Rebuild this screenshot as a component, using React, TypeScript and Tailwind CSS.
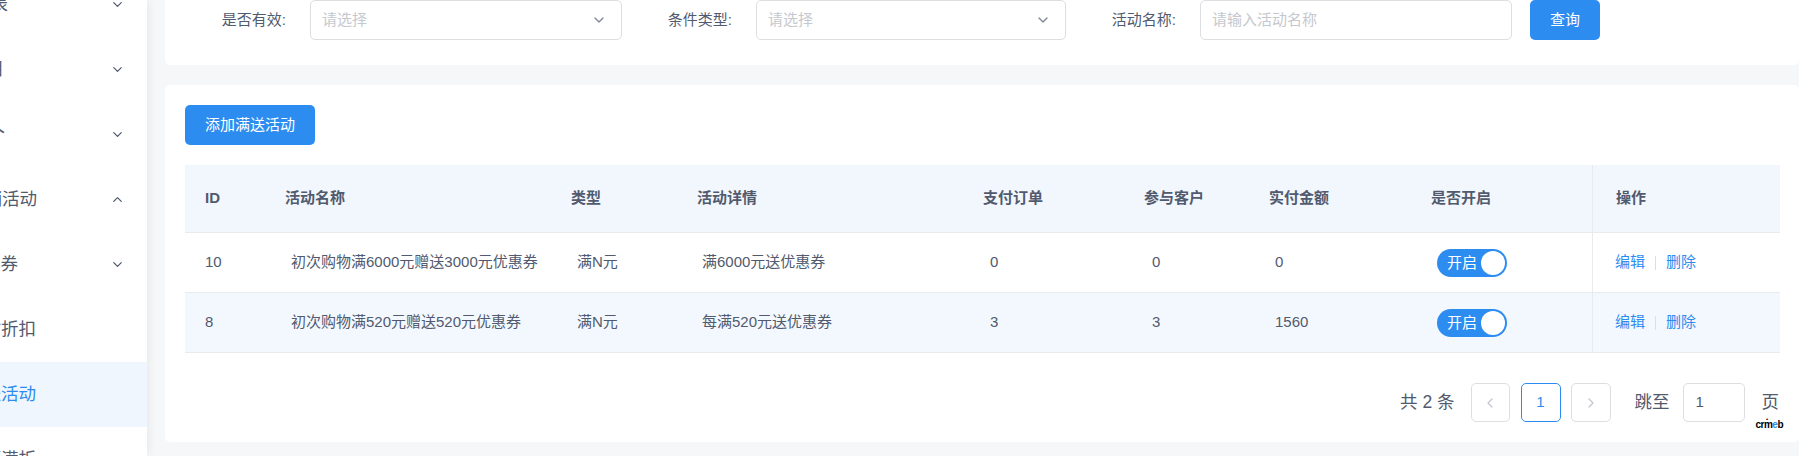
import { ChevronDown, ChevronUp, ChevronLeft, ChevronRight } from "lucide-react";

type Row = {
  id: number;
  name: string;
  type: string;
  detail: string;
  orders: number;
  users: number;
  amount: number;
};

const rows: Row[] = [
  { id: 10, name: "初次购物满6000元赠送3000元优惠券", type: "满N元", detail: "满6000元送优惠券", orders: 0, users: 0, amount: 0 },
  { id: 8, name: "初次购物满520元赠送520元优惠券", type: "满N元", detail: "每满520元送优惠券", orders: 3, users: 3, amount: 1560 },
];

const menu = [
  { text: "数据报表", end: "w-[8px]", icon: "down" },
  { text: "栏目", end: "w-[4px]", icon: "down" },
  { text: "个", end: "w-[5px]", icon: "down" },
  { text: "营销活动", end: "w-[37px]", icon: "up" },
  { text: "优惠券", end: "w-[18px]", icon: "down" },
  { text: "限时折扣", end: "w-[36px]", icon: "" },
  { text: "满送活动", end: "w-[36px]", icon: "", active: true },
  { text: "满额满折", end: "w-[36px]", icon: "" },
];

const grid = "grid grid-cols-[80px_286px_126px_286px_161px_125px_162px_181px_188px]";
const cellPad = ["pl-5", "pl-[26px]", "pl-[26px]", "pl-[25px]", "pl-[27px]", "pl-[28px]", "pl-[26px]", "pl-[26px]", "pl-[22px] border-l border-[#e8eaec]"];
const heads = ["ID", "活动名称", "类型", "活动详情", "支付订单", "参与客户", "实付金额", "是否开启", "操作"];
const headPad = ["pl-5", "pl-5", "pl-5", "pl-5", "pl-5", "pl-5", "pl-5", "pl-5", "pl-[23px] border-l border-[#e8eaec]"];

function Sidebar() {
  return (
    <div className="w-[147px] shrink-0 bg-white relative z-10 shadow-[2px_0_8px_rgba(0,0,0,0.06)] overflow-hidden">
      <div className="-mt-[28px]">
        {menu.map((m, i) => (
          <div
            key={i}
            className={`h-[65px] flex items-center ${m.active ? "bg-[#f0f6fe] text-[#2d8cf0]" : "text-[#515a6e]"}`}
          >
            <div className={`${m.end} overflow-hidden flex justify-end whitespace-nowrap text-[17.5px]`}>
              <span className="shrink-0">{m.text}</span>
            </div>
            {m.icon === "down" && <ChevronDown className="ml-auto mr-[22px] text-[#515a6e]" size={15} strokeWidth={2} />}
            {m.icon === "up" && <ChevronUp className="ml-auto mr-[22px] text-[#515a6e]" size={15} strokeWidth={2} />}
          </div>
        ))}
      </div>
    </div>
  );
}

function SelectBox({ width, placeholder, arrow = true }: { width: string; placeholder: string; arrow?: boolean }) {
  return (
    <div className={`${width} h-[40px] border border-[#dcdee2] rounded-[5px] bg-white flex items-center pl-[11px] pr-[14px]`}>
      <span className="text-[15px] text-[#c5c8ce]">{placeholder}</span>
      {arrow && <ChevronDown className="ml-auto text-[#808695]" size={16} strokeWidth={2} />}
    </div>
  );
}

function Switch() {
  return (
    <div className="w-[70px] h-[28px] rounded-full bg-[#2d8cf0] flex items-center pl-[10px] pr-[2px]">
      <span className="text-[15px] text-white leading-none">开启</span>
      <span className="ml-auto w-[24px] h-[24px] rounded-full bg-white" />
    </div>
  );
}

export default function App() {
  return (
    <div className="w-[1799px] h-[456px] overflow-hidden bg-[#f5f7f9] flex font-['Liberation_Sans','Noto_Sans_CJK_SC',sans-serif]">
      <Sidebar />
      <div className="pl-[18px] shrink-0">
        <div className="w-[1634px]">
          {/* filter */}
          <div className="bg-white h-[65px] rounded-b-[5px] pl-5 flex items-start">
            <label className="w-[125px] h-[40px] pr-[24px] flex items-center justify-end text-[15px] text-[#515a6e]">是否有效:</label>
            <SelectBox width="w-[312px]" placeholder="请选择" />
            <label className="ml-[9px] w-[125px] h-[40px] pr-[24px] flex items-center justify-end text-[15px] text-[#515a6e]">条件类型:</label>
            <SelectBox width="w-[310px]" placeholder="请选择" />
            <label className="ml-[9px] w-[125px] h-[40px] pr-[24px] flex items-center justify-end text-[15px] text-[#515a6e]">活动名称:</label>
            <SelectBox width="w-[312px]" placeholder="请输入活动名称" arrow={false} />
            <button className="ml-[18px] w-[70px] h-[40px] rounded-[5px] bg-[#2d8cf0] text-white text-[15px]">查询</button>
          </div>

          {/* list */}
          <div className="mt-5 bg-white rounded-[5px] h-[357px] pl-5 pr-[19px] pt-5">
            <button className="w-[130px] h-[40px] rounded-[5px] bg-[#2d8cf0] text-white text-[15px]">添加满送活动</button>

            <div className="mt-5 text-[15px] text-[#515a6e]">
              <div className={`${grid} h-[68px] bg-[#f2f7fd] border-b border-[#e8eaec] font-bold`}>
                {heads.map((h, i) => (
                  <div key={h} className={`${headPad[i]} flex items-center`}>{h}</div>
                ))}
              </div>
              {rows.map((r, ri) => {
                const cells = [
                  <span>{r.id}</span>,
                  <span>{r.name}</span>,
                  <span>{r.type}</span>,
                  <span>{r.detail}</span>,
                  <span>{r.orders}</span>,
                  <span>{r.users}</span>,
                  <span>{r.amount}</span>,
                  <Switch />,
                  <div className="flex items-center text-[#2d8cf0]">
                    <span>编辑</span>
                    <span className="mx-[10px] w-px h-[14px] bg-[#dcdee2]" />
                    <span>删除</span>
                  </div>,
                ];
                return (
                  <div key={r.id} className={`${grid} h-[60px] border-b border-[#e8eaec] ${ri === 1 ? "bg-[#f3f8fe]" : "bg-white"}`}>
                    {cells.map((c, i) => (
                      <div key={i} className={`${cellPad[i]} flex items-center`}>{c}</div>
                    ))}
                  </div>
                );
              })}
            </div>

            {/* pagination */}
            <div className="relative mt-[30px] h-[39px] flex items-center justify-end mr-[1px] text-[17.5px] text-[#515a6e]">
              <span className="mr-4">共 2 条</span>
              <div className="w-[39px] h-[39px] border border-[#dcdee2] rounded-[5px] flex items-center justify-center text-[#c5c8ce]">
                <ChevronLeft size={16} strokeWidth={2} />
              </div>
              <div className="ml-[11px] w-[40px] h-[39px] border border-[#2d8cf0] rounded-[5px] flex items-center justify-center text-[15px] text-[#2d8cf0]">1</div>
              <div className="ml-[10px] w-[40px] h-[39px] border border-[#dcdee2] rounded-[5px] flex items-center justify-center text-[#c5c8ce]">
                <ChevronRight size={16} strokeWidth={2} />
              </div>
              <span className="ml-[24px]">跳至</span>
              <div className="ml-[13px] w-[62px] h-[39px] border border-[#dcdee2] rounded-[5px] flex items-center pl-[12px] text-[15px]">1</div>
              <span className="ml-[17px]">页</span>
              <span className="absolute right-[-4px] top-[37px] text-[10px] font-bold leading-none text-black tracking-[-0.5px]">
                cr<span className="relative">m<span className="absolute left-[2px] -top-[3px] text-[6px]">•</span></span><span className="text-[#2d8cf0]">e</span>b
              </span>
            </div>
          </div>
        </div>
      </div>
    </div>
  );
}
